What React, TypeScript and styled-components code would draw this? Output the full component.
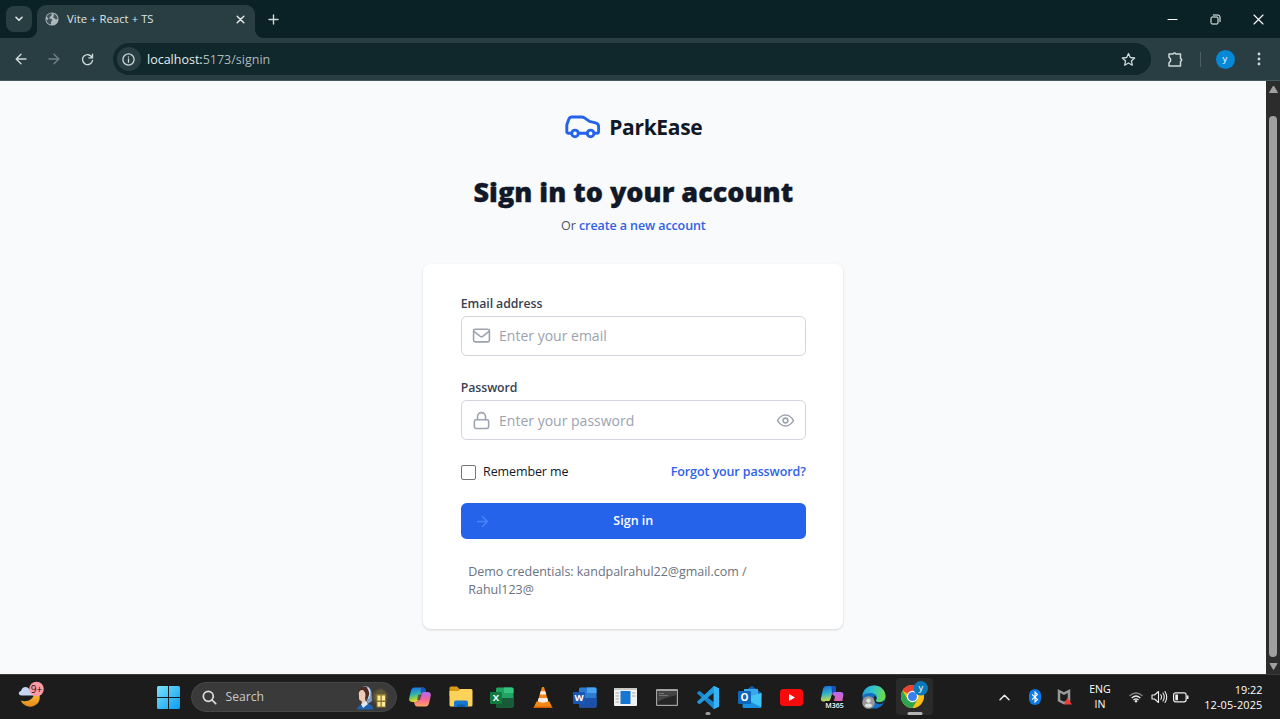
import React from 'react';
import styled, { createGlobalStyle } from 'styled-components';

const Global = createGlobalStyle`
  * { box-sizing: border-box; }
  body { margin: 0; overflow: hidden; background: #f9fafb; font-family: "Open Sans", "Noto Sans", sans-serif; }
  button, input { font-family: inherit; }
  svg { display: block; flex: none; }
`;

const Screen = styled.div`
  width: 1280px; height: 719px; display: flex; flex-direction: column; overflow: hidden;
`;

const Label = styled.span<{ $size: number; $color?: string; $weight?: number; $track?: number; $line?: number }>`
  font-size: ${p => p.$size}px;
  color: ${p => p.$color ?? '#dfe5e6'};
  font-weight: ${p => p.$weight ?? 400};
  letter-spacing: ${p => p.$track ?? 0}px;
  line-height: ${p => p.$line ?? 18.75}px;
  white-space: nowrap;
`;

/* Browser chrome */
const TabStrip = styled.div`
  height: 38px; flex: none; background: #0a2226; display: flex; align-items: flex-start; padding-left: 6px;
`;
const TabSearch = styled.button`
  width: 26px; height: 26px; margin-top: 6px; border: 0; border-radius: 8px; background: #283e43; padding: 0;
  display: grid; place-items: center;
`;
const Tab = styled.div`
  position: relative; width: 218px; height: 33px; margin: 5px 0 0 5px; padding: 0 10.5px 5px 8px; border-radius: 9px 9px 0 0;
  background: #283e43; display: flex; align-items: center;
  &::before, &::after { content: ''; position: absolute; bottom: 0; width: 8px; height: 8px; }
  &::before { left: -8px; background: radial-gradient(circle at 0 0, transparent 7.5px, #283e43 8px); }
  &::after { right: -8px; background: radial-gradient(circle at 100% 0, transparent 7.5px, #283e43 8px); }
`;
const TabTitle = styled(Label)` margin-left: 8px; flex: 1; `;
const NewTab = styled.button`
  border: 0; background: none; padding: 0; width: 20px; height: 38px; margin-left: 8px; display: grid; place-items: center;
`;
const WindowButtons = styled.div`
  margin-left: auto; height: 38px; display: grid; grid-template-columns: 43px 43px 43px; place-items: center;
`;
const Toolbar = styled.div`
  height: 43px; flex: none; background: #283e43; border-bottom: 1px solid #465a5e; display: flex; align-items: center;
  padding-left: 4px;
`;
const NavButton = styled.button`
  width: 33.5px; height: 33px; border: 0; padding: 0; background: none; display: grid; place-items: center;
`;
const AddressBar = styled.div`
  margin-left: 8px; width: 1038px; height: 32px; border-radius: 16px; background: #10272b; display: flex; align-items: center;
  padding: 0 15px 0 4px;
`;
const InfoBadge = styled.span`
  width: 24px; height: 24px; border-radius: 50%; background: #283e43; display: grid; place-items: center; margin-right: 6.5px;
`;
const Url = styled(Label)` flex: 1; padding-top: 2px; b { font-weight: 400; color: #e6ecec; } `;
const ToolbarEnd = styled.div`
  flex: 1; display: grid; grid-template-columns: 49px 1px 49px 19px; align-items: center; justify-items: center;
`;
const Divider = styled.i` width: 1px; height: 15px; background: #4c6064; `;
const Avatar = styled.span`
  width: 19px; height: 19px; border-radius: 50%; background: #0788d6; display: grid; place-items: center;
`;

/* Page */
const Viewport = styled.div` flex: 1; display: flex; min-height: 0; `;
const Page = styled.main`
  flex: 1; background: #f9fafb; padding: 27px 0 0 0.6px; display: flex; flex-direction: column; align-items: center;
`;
const Brand = styled.div` height: 37.5px; display: flex; align-items: center; gap: 7.5px; `;
const Heading = styled.h2`
  margin: 29.3px 0 0; font-size: 27px; line-height: 33.75px; font-weight: 800; letter-spacing: 0; color: #111827; white-space: nowrap;
  -webkit-text-stroke: 0.35px #111827;
`;
const Sub = styled.p`
  margin: 8.4px 0 0; font-size: 12.5px; line-height: 18.75px; color: #4b5563; white-space: nowrap;
`;
const Link = styled.a`
  color: #2f62e6; font-weight: 600; font-size: 12.5px; line-height: 18.75px; letter-spacing: -0.1px; white-space: nowrap;
`;
const Card = styled.form`
  margin-top: 28px; width: 420px; height: 365px; padding: 30.5px 37.5px 29.5px; border-radius: 7.5px; background: #fff;
  box-shadow: 0 1px 3px rgba(0,0,0,.1), 0 1px 2px rgba(0,0,0,.06); display: flex; flex-direction: column;
`;
const Field = styled.div` display: flex; flex-direction: column; gap: 2.5px; margin-bottom: 22.8px; `;
const FieldLabel = styled.label`
  padding-top: 0.8px; font-size: 12.3px; font-weight: 600; color: #374151; line-height: 18.75px; letter-spacing: -0.08px;
`;
const InputBox = styled.div`
  height: 39.4px; border: 1px solid #d1d5db; border-radius: 5.6px; padding: 0 10px 0 10.3px; display: flex; align-items: center; gap: 8px;
`;
const Input = styled.input`
  flex: 1; min-width: 0; border: 0; outline: 0; padding: 0; background: none; font-size: 14px;
  &::placeholder { color: #9ca3af; opacity: 1; }
`;
const Options = styled.div` display: flex; align-items: center; height: 18.75px; `;
const Check = styled.span` width: 15px; height: 15px; border: 1px solid #767676; border-radius: 2px; margin-right: 7.3px; `;
const Spacer = styled.span` flex: 1; `;
const Submit = styled.button`
  margin-top: 22px; height: 35.6px; flex: none; border: 0; border-radius: 5.6px; background: #2563eb; padding: 0 13.5px;
  display: grid; grid-template-columns: 18px 1fr 18px; align-items: center;
`;
const SubmitText = styled(Label)` padding-top: 1px; `;
const Demo = styled.p`
  margin: 23.5px 7.5px 0; font-size: 12.5px; line-height: 18.75px; color: #6b7280; letter-spacing: -0.03px;
`;
const ScrollTrack = styled.div`
  width: 14px; background: #2c2c2c; display: flex; flex-direction: column; align-items: center; padding: 4px 0 3px;
`;
const Thumb = styled.div` width: 8px; height: 541px; margin: 22px 0 5px; border-radius: 4px; background: #9f9f9f; `;

/* Taskbar */
const Taskbar = styled.footer`
  height: 45px; flex: none; background: #1c1c1c; border-top: 1px solid #3a3a3a; display: flex; align-items: center;
`;
const Widgets = styled.div` width: 157px; padding: 0 0 7px 17px; `;
const SearchBox = styled.div`
  width: 206px; height: 30px; margin: 0 2px 0 11px; border-radius: 15px; background: #3a3a3a; border: 1px solid #474747;
  display: flex; align-items: center; padding: 0 7px 0 9.5px; gap: 9px;
`;
const AppCell = styled.div<{ $active?: boolean }>`
  position: relative; width: 41.27px; height: 44px; display: grid; place-items: center;
  &::before {
    content: ''; position: absolute; inset: 3px 2px 4px; border-radius: 4px;
    background: ${p => (p.$active ? '#2a2a2a' : 'transparent')};
  }
  svg { position: relative; }
`;
const Running = styled.i<{ $wide?: boolean }>`
  position: absolute; bottom: 4px; left: 50%; transform: translateX(-50%);
  width: ${p => (p.$wide ? 15 : 5)}px; height: 3px; border-radius: 2px; background: ${p => (p.$wide ? '#b5b5b5' : '#9a9a9a')};
`;
const Tray = styled.div`
  margin-left: auto; padding-right: 17.5px; display: flex; align-items: center;
`;
const TrayIcon = styled.span<{ $w: number }>` width: ${p => p.$w}px; display: grid; place-items: center; `;
const Stack = styled.div<{ $w: number; $align: string }>`
  width: ${p => p.$w}px; display: flex; flex-direction: column; align-items: ${p => p.$align};
`;

type StrokeProps = { w: number; h?: number; box?: string; d: string; c?: string; sw?: number; children?: React.ReactNode };
const Line = ({ w, h = w, box = '0 0 24 24', d, c = '#cfd8d9', sw = 2, children }: StrokeProps) => (
  <svg width={w} height={h} viewBox={box} fill="none" stroke={c} strokeWidth={sw} strokeLinecap="round" strokeLinejoin="round">
    <path d={d} />{children}
  </svg>
);

const Globe = () => (
  <svg width="14" height="14" viewBox="0 0 14 14">
    <circle cx="7" cy="7" r="6.6" fill="#aeb8ba" />
    <path d="M6 1.3C7.4 2 7.1 3 6.2 3.5 5.2 4 5.7 5 4.6 5.4 3.8 5.8 4.5 6.8 5.7 6.7 7.2 6.7 7.5 7.7 6.8 8.6 6 9.4 6.4 10.4 5.8 12.5 3.2 12 1.3 9.8 1.2 7.2L3 7.9 3.2 6 1.6 5C2.3 3 3.8 1.6 6 1.3ZM8.6 1.4 11.6 3.7 12.7 7 10.8 7.5 9.7 6.2 7.9 5.6 8.8 4.2Z" fill="#425459" />
  </svg>
);

const Car = () => (
  <svg width="37.5" height="37.5" viewBox="0 0 37.5 37.5" fill="none" stroke="#2563eb" strokeWidth="2.9" strokeLinejoin="round" strokeLinecap="round">
    <path d="M7.2 25.200H4.600Q2.800 25.200 2.800 23.500V16.800L4.800 11.200Q5.700 9 8 9H17.500Q19.200 9 20.500 9.900L25.500 13.400 31.600 14.900Q34.600 15.700 34.600 18.700V23.500Q34.600 25.200 32.900 25.200H30.500M14.800 25.200H23" />
    <circle cx="11" cy="25.400" r="3.300" /><circle cx="26.600" cy="25.400" r="3.300" />
  </svg>
);

const Weather = () => (
  <svg width="28" height="30" viewBox="0 0 28 30">
    <defs><linearGradient id="moon" x2="0" y2="1"><stop stopColor="#ffc33b" /><stop offset="1" stopColor="#e58a1e" /></linearGradient></defs>
    <path d="M22 12.5C23.3 18 23 22 20.5 24.5 16 29.500 7 28.500 3.800 21.500 9 23.500 17 21.500 17.500 13Z" fill="url(#moon)" />
    <path d="M4.500 16.500C1 16.500 1 12.500 4 12 5 7.500 10 6.500 12.500 10.500L17 12.500V16.500Z" fill="#c6d5f2" />
    <circle cx="19.500" cy="10" r="7.300" fill="#ff99a4" />
    <text x="19.500" y="13.600" textAnchor="middle" fontSize="10" fontFamily="Open Sans" fill="#241114">9+</text>
  </svg>
);

const Start = () => (
  <svg width="23" height="23" viewBox="0 0 23 23">
    <defs><linearGradient id="win" x2="1" y2="1"><stop stopColor="#78e3fc" /><stop offset="1" stopColor="#0a9cf0" /></linearGradient></defs>
    <path d="M1.500 0H11V11H0V1.500Q0 0 1.500 0ZM12 0H21.500Q23 0 23 1.500V11H12ZM0 12H11V23H1.500Q0 23 0 21.500ZM12 12H23V21.500Q23 23 21.500 23H12Z" fill="url(#win)" />
  </svg>
);

const SearchArt = () => (
  <svg width="34" height="26" viewBox="0 0 34 26">
    <defs><radialGradient id="glow"><stop stopColor="#e8c945" stopOpacity=".75" /><stop offset="1" stopColor="#8a7426" stopOpacity="0" /></radialGradient></defs>
    <circle cx="25" cy="13" r="9.500" fill="url(#glow)" />
    <path d="M21 9 26 5 31 9V10H21Z" fill="#5f5938" />
    <rect x="21.500" y="10" width="9.500" height="13.500" fill="#8d742b" />
    <path d="M22.500 11.500H25.500V16.500H22.500ZM26.800 11.500H30V16.500H26.800ZM22.500 18H25.500V22.500H22.500ZM26.800 18H30V22.500H26.800Z" fill="#ffea96" />
    <path d="M2 25.500C3 21.500 6 20 9 20 14 19 18 21 18.500 25.500Z" fill="#1f5fae" />
    <path d="M6 20 11 16.500 13 20 8 24Z" fill="#dfeaf4" />
    <path d="M8 2.500C12 1 16.500 4 16.500 9L17 17 12.500 20 11 10Z" fill="#7c9cc9" />
    <path d="M3.500 8C3.500 2 11 .5 14 5.500 15.500 9 14.500 14 12 15L9 11Z" fill="#4b2c28" />
    <path d="M3.800 9C4.500 6.500 6.500 5.500 8.500 6.500 10.500 8 11 11 10 14L10.500 18 7 19.500 6.500 17Q3.800 16.500 4 13.500Z" fill="#f0c9b4" />
    <path d="M12.500 3.500Q16.500 8 13.500 14.500" fill="none" stroke="#dce8f5" strokeWidth="1.200" />
  </svg>
);

const Copilot = () => (
  <svg width="22" height="20" viewBox="0 0 22 20">
    <defs>
      <linearGradient id="cpa" x2=".25" y2="1"><stop offset=".1" stopColor="#2173e6" /><stop offset=".5" stopColor="#2bb3ae" /><stop offset=".75" stopColor="#8ccb50" /><stop offset="1" stopColor="#f0d52f" /></linearGradient>
      <linearGradient id="cpb" x2="0" y2="1"><stop stopColor="#b268f2" /><stop offset=".5" stopColor="#f2649a" /><stop offset="1" stopColor="#ffa55c" /></linearGradient>
    </defs>
    <path d="M5.500 .5H13.800Q15.800 .5 16.300 2.500L17 5H14.500Q12.500 5 12 7L10 12.500Q9.200 15 6.500 15H3.500Q-.6 15 .3 11L2 3.500Q2.800 .5 5.500 .5Z" fill="url(#cpa)" />
    <path d="M16.500 19.500H8.200Q6.200 19.500 5.700 17.500L5 15H7Q9.200 15 10 12.500L12 7Q12.500 5 14.500 5H18.500Q22.500 5 21.700 9L20 16.500Q19.200 19.500 16.500 19.500Z" fill="url(#cpb)" />
    <path d="M12.500 .5H13.800Q15.800 .5 16.300 2.500L17 5H14.500Q12.800 5 12 6.500L11.500 3Z" fill="#1d53bd" />
    <path d="M9.300 7.500 8 13H10.800L12.800 7.500Z" fill="#1c1c1c" opacity=".55" />
  </svg>
);

const Folder = () => (
  <svg width="24" height="22" viewBox="0 0 24 22">
    <path d="M.500 2Q.500.500 2 .500H8L11 3.500H22V10H.500Z" fill="#d99a18" />
    <path d="M.500 5H9L11.500 3H22Q23.500 3 23.500 4.500V19Q23.500 20.500 22 20.500H2Q.500 20.500.500 19Z" fill="#ffd25a" />
    <path d="M5 21V16.500Q5 14.500 7 14.500H17Q19 14.500 19 16.500V21Z" fill="#1878cf" />
    <path d="M8 21V18.500H16V21Z" fill="#105ca6" />
  </svg>
);

const Office = ({ letter, c }: { letter: string; c: string[] }) => (
  <svg width="24" height="21" viewBox="0 0 24 21">
    <rect x="6" y=".5" width="17.500" height="20" rx="1.500" fill={c[1]} />
    <path d="M14 .5H22Q23.500.5 23.500 2V6H14Z" fill={c[0]} />
    <path d="M6 11H23.500V19Q23.500 20.500 22 20.500H7.500Q6 20.500 6 19Z" fill={c[2]} />
    <rect x="0" y="5" width="12" height="12" rx="1" fill={c[3]} />
    <text x="6" y="14.300" textAnchor="middle" fontFamily="Open Sans" fontWeight="700" fontSize="9.500" fill="#fff">{letter}</text>
  </svg>
);

const Vlc = () => (
  <svg width="20" height="23" viewBox="0 0 20 23">
    <path d="M3.500 15.500H16.500L19.500 22H.5Z" fill="#f28a14" />
    <path d="M9 1H11L16 18Q10 21 4 18Z" fill="#f48616" />
    <path d="M7.700 5.200H12.300L13.300 8.600H6.700ZM5.700 12H14.300L15.300 15.300Q10 18 4.700 15.300Z" fill="#f3ede6" />
    <path d="M1.500 20.500H18.500L19.500 22H.5Z" fill="#d45c05" />
  </svg>
);

const Reader = () => (
  <svg width="23" height="18" viewBox="0 0 23 18">
    <rect width="23" height="18" rx="1" fill="#f2f2f2" /><path d="M0 0H23V2H0Z" fill="#c9c9c9" />
    <rect x="6.500" y="3" width="10" height="13" fill="#1776d2" />
    <path d="M1.500 5H5M1.500 8H5M1.500 11H5M1.500 14H5M18 5H21.500M18 8H21.500" stroke="#a7a7a7" />
  </svg>
);

const Terminal = () => (
  <svg width="22" height="17" viewBox="0 0 22 17">
    <rect width="22" height="17" rx="1" fill="#a3a3a3" /><rect x="1.200" y="2" width="19.600" height="13.800" fill="#252525" />
    <path d="M1.200 2H20.800V6Q10 8 1.200 13Z" fill="#444" /><path d="M3 4.500H8M3 6.500H12" stroke="#888" strokeWidth=".7" />
  </svg>
);

const VsCode = () => (
  <svg width="23" height="23" viewBox="0 0 24 24">
    <path d="M17.500 0 23 2.500V21.500L17.500 24 2 9.500.3 8Q-.2 7.300.4 6.700L1.700 5.500Q2.400 5 3.200 5.600L17.500 17Z" fill="#1787cf" />
    <path d="M17.500 24 23 21.500V2.500L17.500 0 2 14.500.3 16Q-.2 16.700.4 17.300L1.700 18.500Q2.400 19 3.200 18.400L17.500 7Z" fill="#219bdf" />
    <path d="M17.500 0 23 2.500V21.500L17.500 24Z" fill="#36b3f5" />
  </svg>
);

const Outlook = () => (
  <svg width="24" height="22" viewBox="0 0 24 22">
    <path d="M4 7 14 0 23.500 7V12H4Z" fill="#1065b7" /><path d="M6 3H20V14H6Z" fill="#3aa7eb" />
    <path d="M5 12 23.500 7V20Q23.500 22 21.500 22H6Z" fill="#42c5f5" />
    <path d="M5 12 23 21Q22 22 21 22H6Q4.500 22 4.500 20.500Z" fill="#188fe3" />
    <rect y="5" width="13" height="13" rx="1.200" fill="#0e67bd" />
    <text x="6.500" y="15" fontFamily="Open Sans" fontSize="10" fontWeight="700" fill="#fff" textAnchor="middle">O</text>
  </svg>
);

const YouTube = () => <svg width="23" height="17" viewBox="0 0 23 17"><rect width="23" height="17" rx="3.500" fill="#f90b0b" /><path d="M9 5V12L15 8.500Z" fill="#fff" /></svg>;

const M365 = () => (
  <svg width="24" height="24" viewBox="0 0 24 24">
    <defs>
      <linearGradient id="m3a" x2=".2" y2="1"><stop stopColor="#1e62d8" /><stop offset=".5" stopColor="#2aaed0" /><stop offset="1" stopColor="#c4d94a" /></linearGradient>
      <linearGradient id="m3b" x2="0" y2="1"><stop stopColor="#b76af2" /><stop offset="1" stopColor="#ee5fa0" /></linearGradient>
    </defs>
    <path d="M6.500 1H13.500Q16 1 16 3.500V7H14.500Q12.500 7 12 9L10.500 14Q9.800 16.500 7 16.500H3.500Q.3 16.500 1 13L3 4Q3.700 1 6.500 1Z" fill="url(#m3a)" />
    <path d="M14.500 7H20.500Q24 7 23.300 10.500L22 18H13.500L15 11.500 12 9Q12.500 7 14.500 7Z" fill="url(#m3b)" />
    <path d="M11.500 1H13.500Q16 1 16 3.500V7H14.500Q13 7 12 9Z" fill="#1b4fc0" />
    <rect x="5" y="16" width="19" height="8" fill="#151515" />
    <text x="14.500" y="22.800" textAnchor="middle" fontFamily="Open Sans" fontSize="7" fontWeight="600" fill="#fff">M365</text>
  </svg>
);

const Edge = () => (
  <svg width="24" height="24" viewBox="0 0 24 24">
    <defs><linearGradient id="edge" x2="1" y2=".2"><stop stopColor="#249ce0" /><stop offset=".55" stopColor="#38c8c4" /><stop offset="1" stopColor="#68d94e" /></linearGradient></defs>
    <circle cx="12" cy="12" r="11.500" fill="#1470c5" />
    <path d="M.5 11C1 4 6 .5 12 .5 19 .5 23.500 5.500 23.500 11 23.500 15.500 20 17.500 16 17 13.500 16.700 13.500 15.500 14.300 14.500 16 12 14 8.500 9.800 8 5.500 7.600 2 9 .5 11Z" fill="url(#edge)" />
    <path d="M12.800 10.500C15 12 15 13.500 14 15 13.500 16.500 15 17.200 17 17.200 20 17.200 22 16 23.500 14.500L22 18Q19.500 19.500 16.500 19C11.500 18 10 14 12.800 10.500Z" fill="#1b2a35" />
    <circle cx="6.500" cy="17.500" r="6.300" fill="#999" /><circle cx="6.500" cy="15.600" r="2.200" fill="#e0e0e0" /><path d="M2.800 21Q3 18.500 6.500 18.500T10.200 21Q6.500 24 2.800 21Z" fill="#e0e0e0" />
  </svg>
);

const Chrome = () => (
  <svg width="27" height="32" viewBox="1.500 1 27 32">
    <circle cx="13" cy="16.500" r="11.500" fill="#fbc116" />
    <path d="M13 16.500 3 10.800A11.500 11.500 0 0 1 23 10.800L18 16Z" fill="#e94335" />
    <path d="M3 10.800A11.500 11.500 0 0 0 13 28L18 19.500 13 16.500 8 19Z" fill="#2da44e" />
    <circle cx="13" cy="16.500" r="5.700" fill="#fff" /><circle cx="13" cy="16.500" r="4.500" fill="#3a7ff0" />
    <circle cx="21.300" cy="8.300" r="7.200" fill="#0b78b8" />
    <text x="21.300" y="11.300" textAnchor="middle" fontFamily="Open Sans" fontSize="9.500" fill="#fff">y</text>
  </svg>
);

const Bluetooth = () => (
  <svg width="12" height="16" viewBox="0 0 12 16"><rect width="12" height="16" rx="6" fill="#0a7be6" /><path d="M3 5.300 8.500 10.500 6 13V3L8.500 5.500 3 10.700" fill="none" stroke="#fff" strokeWidth="1.100" /></svg>
);
const Shield = () => (
  <svg width="15" height="16" viewBox="0 0 15 16"><path d="M2 2 7 4.500 12 2V11.500L7 14 2 11.500Z" fill="none" stroke="#999" strokeWidth="2.500" /><path d="M10.500 8.500 15 15.500H7Z" fill="#ef3c35" /></svg>
);
const Wifi = () => (
  <svg width="14" height="12" viewBox="0 0 14 12" fill="none" strokeLinecap="round" strokeWidth="1.300">
    <path d="M1 4.500Q7-.5 13 4.500" stroke="#888" /><path d="M3 6.700Q7 3.300 11 6.700M4.800 8.700Q7 7 9.200 8.700" stroke="#eee" /><circle cx="7" cy="10.300" r="1.200" fill="#eee" />
  </svg>
);
const Battery = () => (
  <svg width="16" height="11" viewBox="0 0 16 11"><rect x=".6" y=".8" width="12.500" height="9" rx="2" fill="none" stroke="#eee" strokeWidth="1.200" /><path d="M2.300 2.500H5V8.200H2.300ZM13.800 3.500H15.500V7H13.800Z" fill="#eee" /></svg>
);

const apps: { id: string; icon: React.ReactNode; running?: boolean; active?: boolean }[] = [
  { id: 'copilot', icon: <Copilot /> },
  { id: 'explorer', icon: <Folder /> },
  { id: 'excel', icon: <Office letter="X" c={['#35c481', '#21a366', '#185c37', '#107c41']} /> },
  { id: 'vlc', icon: <Vlc /> },
  { id: 'word', icon: <Office letter="W" c={['#4ba3f0', '#2b7cd3', '#1b51a8', '#1a56b4']} /> },
  { id: 'reader', icon: <Reader /> },
  { id: 'terminal', icon: <Terminal /> },
  { id: 'code', icon: <VsCode />, running: true },
  { id: 'outlook', icon: <Outlook /> },
  { id: 'youtube', icon: <YouTube /> },
  { id: 'm365', icon: <M365 /> },
  { id: 'edge', icon: <Edge /> },
  { id: 'chrome', icon: <Chrome />, active: true },
];

export default function App() {
  return (
    <Screen>
      <Global />
      <TabStrip>
        <TabSearch><Line w={8} h={6} box="0 0 8 6" d="M1 1.300 4 4.300 7 1.300" c="#e1e7e8" sw={1.600} /></TabSearch>
        <Tab>
          <Globe />
          <TabTitle $size={11.2} $track={0.08}>Vite + React + TS</TabTitle>
          <Line w={9} box="0 0 9 9" d="M1.200 1.200 7.800 7.800M7.800 1.200 1.200 7.800" c="#e1e7e8" sw={1.500} />
        </Tab>
        <NewTab><Line w={11} box="0 0 11 11" d="M5.500 1V10M1 5.500H10" sw={1.400} /></NewTab>
        <WindowButtons>
          <Line w={11} box="0 0 11 11" d="M1 5.500H10" c="#fff" sw={1} />
          <Line w={11} box="0 0 11 11" d="M1 4Q1 3 2 3H7Q8 3 8 4V9Q8 10 7 10H2Q1 10 1 9ZM3.300 1H8Q10 1 10 3V7.700" c="#fff" sw={1} />
          <Line w={11} box="0 0 11 11" d="M1 1 10 10M10 1 1 10" c="#fff" sw={1.100} />
        </WindowButtons>
      </TabStrip>
      <Toolbar>
        <NavButton><Line w={12} box="0 0 12 12" d="M11 6H1.200M6 1.200 1.200 6 6 10.800" sw={1.400} /></NavButton>
        <NavButton><Line w={12} box="0 0 12 12" d="M1 6H10.800M6 1.200 10.800 6 6 10.800" c="#708084" sw={1.400} /></NavButton>
        <NavButton><Line w={13} box="0 0 13 13" d="M11 4.300A5 5 0 1 0 11.500 7.500M11.500 1.300V4.900H7.900" sw={1.400} /></NavButton>
        <AddressBar>
          <InfoBadge><Line w={13} box="0 0 13 13" d="M6.500 6V9.200M6.500 3.900V4" sw={1.300}><circle cx="6.500" cy="6.500" r="5.600" /></Line></InfoBadge>
          <Url $size={12.5} $color="#aebabc"><b>localhost:</b>5173/signin</Url>
          <Line w={15} box="0 0 15 15" d="M7.500 1.500 9.300 5.500 13.700 6 10.400 8.900 11.300 13.200 7.500 11 3.700 13.200 4.600 8.900 1.300 6 5.700 5.500Z" sw={1.300} />
        </AddressBar>
        <ToolbarEnd>
          <Line w={17} box="0 0 17 17" d="M2 3H6Q7.500 1 9 3H13.500V7.500Q16 9 13.500 10.500V15H2V11.800Q5.500 9 2 6.200Z" sw={1.500} />
          <Divider />
          <Avatar><Label $size={9.5} $color="#fff" $line={16}>y</Label></Avatar>
          <svg width="4" height="14" viewBox="0 0 4 14" fill="#cfd8d9"><circle cx="2" cy="2" r="1.400" /><circle cx="2" cy="7" r="1.400" /><circle cx="2" cy="12" r="1.400" /></svg>
        </ToolbarEnd>
      </Toolbar>

      <Viewport>
        <Page>
          <Brand><Car /><Label $size={21} $weight={700} $color="#111827" $track={-0.3} $line={30}>ParkEase</Label></Brand>
          <Heading>Sign in to your account</Heading>
          <Sub>Or <Link>create a new account</Link></Sub>
          <Card>
            <Field>
              <FieldLabel>Email address</FieldLabel>
              <InputBox>
                <Line w={19} d="M22 6.500 13.500 13Q12 14 10.500 13L2 6.500" c="#9ca3af"><rect x="2" y="4" width="20" height="16" rx="2" /></Line>
                <Input type="email" placeholder="Enter your email" />
              </InputBox>
            </Field>
            <Field>
              <FieldLabel>Password</FieldLabel>
              <InputBox>
                <Line w={19} d="M7 11V7A5 5 0 0 1 17 7V11" c="#9ca3af"><rect x="3" y="11" width="18" height="11" rx="2" /></Line>
                <Input type="password" placeholder="Enter your password" />
                <Line w={19} d="M2 12S5.500 5 12 5 22 12 22 12 18.500 19 12 19 2 12 2 12Z" c="#9ca3af"><circle cx="12" cy="12" r="3" /></Line>
              </InputBox>
            </Field>
            <Options>
              <Check /><Label $size={12.5} $color="#111827" $track={-0.12}>Remember me</Label>
              <Spacer /><Link>Forgot your password?</Link>
            </Options>
            <Submit type="button">
              <Line w={17} d="M5 12H19M12 5 19 12 12 19" c="#4a84f6" />
              <SubmitText $size={12.5} $weight={600} $color="#fff">Sign in</SubmitText>
            </Submit>
            <Demo>Demo credentials: kandpalrahul22@gmail.com / Rahul123@</Demo>
          </Card>
        </Page>
        <ScrollTrack>
          <svg width="9" height="9" viewBox="0 0 9 9"><path d="M4.500 1 8.500 7.500H.5Z" fill="#a0a0a0" stroke="#a0a0a0" strokeLinejoin="round" /></svg>
          <Thumb />
          <svg width="9" height="9" viewBox="0 0 9 9"><path d="M4.500 7.500 8 1.500H1Z" fill="#a0a0a0" stroke="#a0a0a0" strokeLinejoin="round" /></svg>
        </ScrollTrack>
      </Viewport>

      <Taskbar>
        <Widgets><Weather /></Widgets>
        <Start />
        <SearchBox>
          <Line w={15} box="0 0 15 15" d="M10 10 13.700 13.700" c="#ddd" sw={1.700}><circle cx="6.300" cy="6.300" r="5" /></Line>
          <Label $size={12.2} $color="#c9c9c9">Search</Label>
          <Spacer />
          <SearchArt />
        </SearchBox>
        {apps.map(a => (
          <AppCell key={a.id} $active={a.active}>
            {a.icon}
            {(a.running || a.active) && <Running $wide={a.active} />}
          </AppCell>
        ))}
        <Tray>
          <TrayIcon $w={30}><Line w={11} h={7} box="0 0 11 7" d="M1 5.800 5.500 1.200 10 5.800" c="#eee" sw={1.400} /></TrayIcon>
          <TrayIcon $w={30}><Bluetooth /></TrayIcon>
          <TrayIcon $w={30}><Shield /></TrayIcon>
          <Stack $w={41} $align="center"><Label $size={10.6} $color="#fff" $line={15}>ENG</Label><Label $size={10.6} $color="#fff" $line={15}>IN</Label></Stack>
          <TrayIcon $w={30}><Wifi /></TrayIcon>
          <TrayIcon $w={16}><Line w={17} h={14} box="0 0 17 14" d="M1 5H3.500L7.500 1.500V12.500L3.500 9H1ZM9.800 4.700Q11.300 7 9.800 9.300M12 3Q14.500 7 12 11M14 1.500Q17.500 7 14 12.500" c="#eee" sw={1.100} /></TrayIcon>
          <TrayIcon $w={29}><Battery /></TrayIcon>
          <Stack $w={67} $align="flex-end"><Label $size={10.9} $color="#fff" $line={15}>19:22</Label><Label $size={10.9} $color="#fff" $track={0.15} $line={15}>12-05-2025</Label></Stack>
        </Tray>
      </Taskbar>
    </Screen>
  );
}
